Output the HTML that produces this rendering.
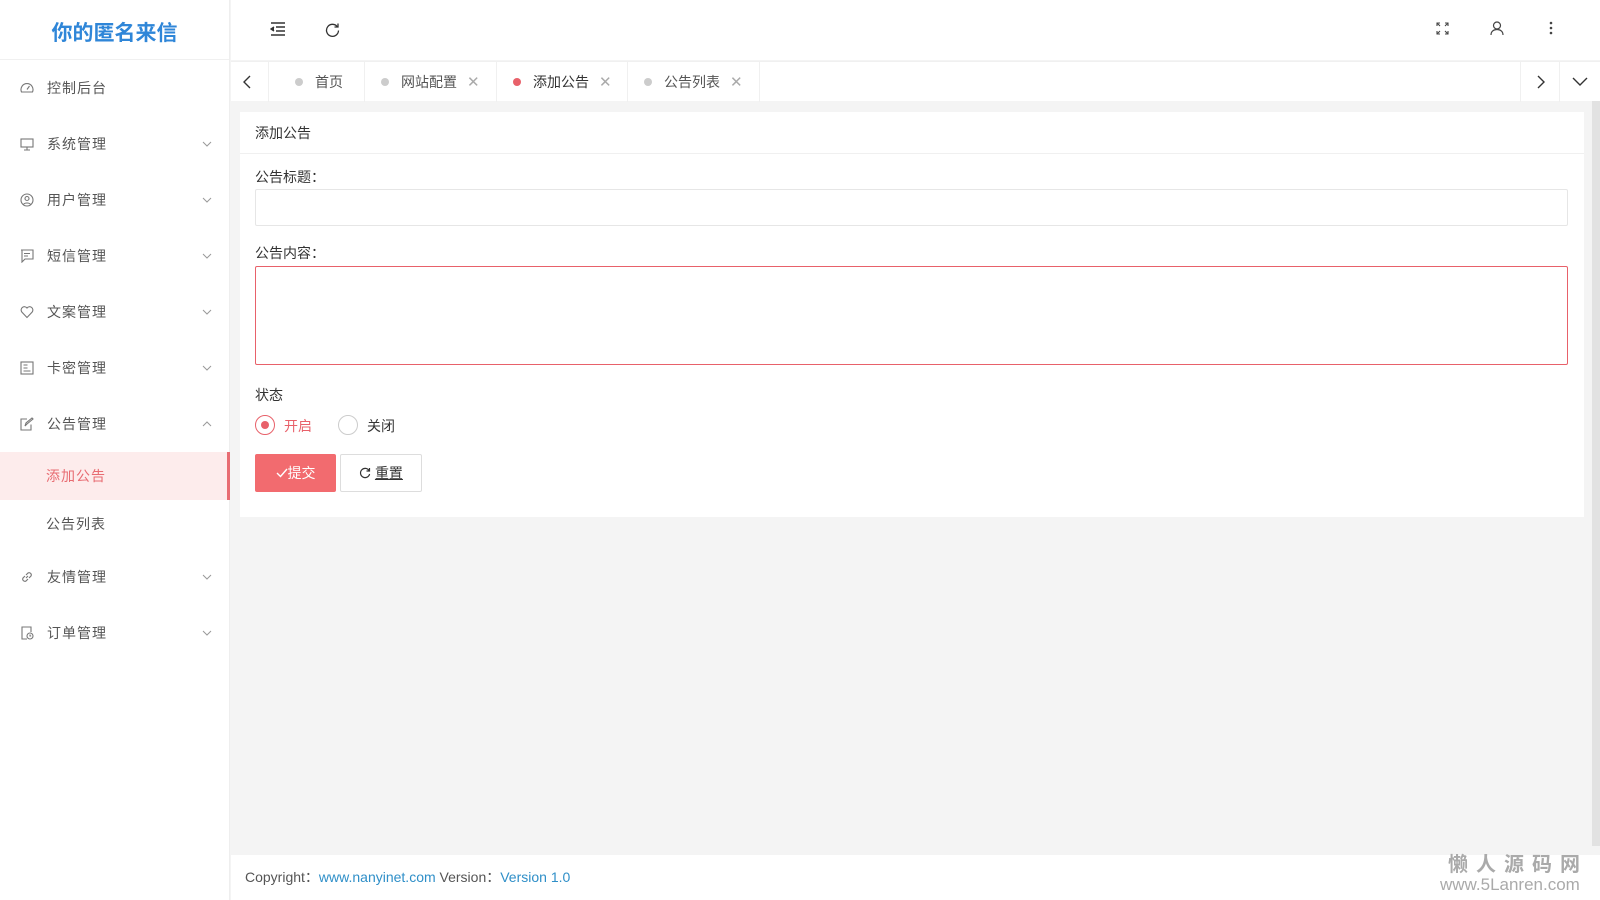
<!DOCTYPE html>
<html><head><meta charset="utf-8"><style>
*{box-sizing:border-box;margin:0;padding:0}
body{width:1600px;height:900px;overflow:hidden;background:#f4f4f4;font-family:"Liberation Sans","Noto Sans CJK SC",sans-serif;font-size:14px;color:#333;position:relative}
.side{position:absolute;left:0;top:0;width:230px;height:900px;background:#fff;border-right:1px solid #eee}
.logo{height:60px;line-height:68px;text-align:center;font-size:21px;font-weight:bold;color:#2f86d8;border-bottom:1px solid #f0f0f0}
.mi{position:absolute;left:0;width:230px;height:30px;line-height:30px;color:#555;letter-spacing:1px}
.mi svg{position:absolute;left:20px;top:8px}
.mi .t{position:absolute;left:47px}
.sub{position:absolute;left:0;width:230px;height:48px;line-height:48px;padding-left:46px;color:#555;letter-spacing:1px}
.act{background:#fdecec;color:#e86c72;border-right:3px solid #e86c72}
.top{position:absolute;left:231px;top:0;right:0;height:60px;background:#fff}
.tabs{position:absolute;left:231px;top:61px;right:0;height:40px;background:#fff;border-top:1px solid #f0f0f0}
.tab{position:absolute;top:0;height:40px;line-height:40px;border-right:1px solid #f0f0f0;color:#555}
.dot{display:inline-block;width:8px;height:8px;border-radius:50%;background:#ccc;margin-right:12px;vertical-align:1px}
.x{color:#aaa;margin-left:10px;font-size:15px}
.card{position:absolute;left:240px;top:112px;width:1344px;height:405px;background:#fff}
.ch{height:42px;line-height:42px;padding-left:15px;border-bottom:1px solid #f0f0f0;color:#333}
.lbl{position:absolute;left:15px;color:#333}
.inp{position:absolute;left:15px;width:1313px;border:1px solid #e6e6e6;border-radius:2px}
.foot{position:absolute;left:231px;top:855px;right:0;height:45px;background:#fff;line-height:45px;padding-left:14px;color:#555;font-size:14px}
.foot a{color:#2f8fc8;text-decoration:none}
</style></head><body>
<div class="side">
<div class="logo">你的匿名来信</div>
<div class="mi" style="top:73px"><svg width="14" height="14" viewBox="0 0 14 14" fill="none" stroke="#777" stroke-width="1.1"><path d="M1.5 11A6 6 0 1 1 12.5 11Z"/><path d="M7 8.5L9.5 5"/></svg><span class="t">控制后台</span></div>
<div class="mi" style="top:129px"><svg width="14" height="14" viewBox="0 0 14 14" fill="none" stroke="#777" stroke-width="1.1"><rect x="1" y="2" width="12" height="8"/><path d="M4 13h6M7 10v3"/></svg><span class="t">系统管理</span><svg width="10" height="6" viewBox="0 0 10 6" style="left:202px;top:12px"><path d="M1 1l4 4 4-4" fill="none" stroke="#999"/></svg></div>
<div class="mi" style="top:185px"><svg width="14" height="14" viewBox="0 0 14 14" fill="none" stroke="#777" stroke-width="1.1"><circle cx="7" cy="7" r="6"/><circle cx="7" cy="5.5" r="2"/><path d="M3.5 11.5c1-2 6-2 7 0"/></svg><span class="t">用户管理</span><svg width="10" height="6" viewBox="0 0 10 6" style="left:202px;top:12px"><path d="M1 1l4 4 4-4" fill="none" stroke="#999"/></svg></div>
<div class="mi" style="top:241px"><svg width="14" height="14" viewBox="0 0 14 14" fill="none" stroke="#777" stroke-width="1.1"><path d="M1 1h12v9H5l-3 3V1z"/><path d="M4 4.5h6M4 7h4"/></svg><span class="t">短信管理</span><svg width="10" height="6" viewBox="0 0 10 6" style="left:202px;top:12px"><path d="M1 1l4 4 4-4" fill="none" stroke="#999"/></svg></div>
<div class="mi" style="top:297px"><svg width="14" height="14" viewBox="0 0 14 14" fill="none" stroke="#777" stroke-width="1.1"><path d="M7 12.5L1.8 7A3 3 0 0 1 7 3a3 3 0 0 1 5.2 4z"/></svg><span class="t">文案管理</span><svg width="10" height="6" viewBox="0 0 10 6" style="left:202px;top:12px"><path d="M1 1l4 4 4-4" fill="none" stroke="#999"/></svg></div>
<div class="mi" style="top:353px"><svg width="14" height="14" viewBox="0 0 14 14" fill="none" stroke="#777" stroke-width="1.1"><rect x="1" y="1" width="12" height="12"/><path d="M3.5 4h4M3.5 7h4M3.5 10h7"/></svg><span class="t">卡密管理</span><svg width="10" height="6" viewBox="0 0 10 6" style="left:202px;top:12px"><path d="M1 1l4 4 4-4" fill="none" stroke="#999"/></svg></div>
<div class="mi" style="top:409px"><svg width="14" height="14" viewBox="0 0 14 14" fill="none" stroke="#777" stroke-width="1.1"><path d="M11 7.5V13H1V2h6"/><path d="M5 9l1-3 6-5 1 1-6 5z"/></svg><span class="t">公告管理</span><svg width="10" height="6" viewBox="0 0 10 6" style="left:202px;top:12px"><path d="M1 5l4-4 4 4" fill="none" stroke="#999"/></svg></div>
<div class="sub act" style="top:452px">添加公告</div>
<div class="sub" style="top:500px">公告列表</div>
<div class="mi" style="top:562px"><svg width="14" height="14" viewBox="0 0 14 14" fill="none" stroke="#777" stroke-width="1.1"><path d="M6 8l2-2M5 6L3 8a2.2 2.2 0 0 0 3 3l2-2M9 8l2-2a2.2 2.2 0 0 0-3-3L6 5"/></svg><span class="t">友情管理</span><svg width="10" height="6" viewBox="0 0 10 6" style="left:202px;top:12px"><path d="M1 1l4 4 4-4" fill="none" stroke="#999"/></svg></div>
<div class="mi" style="top:618px"><svg width="14" height="14" viewBox="0 0 14 14" fill="none" stroke="#777" stroke-width="1.1"><path d="M7 13H2V1h9v5"/><circle cx="10" cy="10" r="3"/><path d="M10 8.5V10h1.2"/></svg><span class="t">订单管理</span><svg width="10" height="6" viewBox="0 0 10 6" style="left:202px;top:12px"><path d="M1 1l4 4 4-4" fill="none" stroke="#999"/></svg></div>
</div>
<div class="top">
<svg style="position:absolute;left:39px;top:22px" width="16" height="14" viewBox="0 0 16 14" fill="none" stroke="#333" stroke-width="1.4"><path d="M1 1h14M6 5h9M6 9h9M1 13h14"/><path d="M4 5L1 7l3 2" fill="#333"/></svg>
<svg style="position:absolute;left:94px;top:22px" width="15" height="15" viewBox="0 0 15 15" fill="none" stroke="#333" stroke-width="1.3"><path d="M12.5 5A6 6 0 1 0 13.5 8.5"/><path d="M13 1.5V5H9.5"/></svg>
<svg style="position:absolute;left:1205px;top:22px" width="13" height="13" viewBox="0 0 13 13" fill="none" stroke="#444" stroke-width="1.1"><path d="M1 4V1h3M9 1h3v3M12 9v3H9M4 12H1V9M1 1l3 3M12 1L9 4M12 12L9 9M1 12l3-3"/></svg>
<svg style="position:absolute;left:1259px;top:21px" width="14" height="15" viewBox="0 0 14 15" fill="none" stroke="#444" stroke-width="1.2"><circle cx="7" cy="4.5" r="3.5"/><path d="M1 14c0-3.5 2.5-5.5 6-5.5s6 2 6 5.5"/></svg>
<svg style="position:absolute;left:1318px;top:21px" width="4" height="14" viewBox="0 0 4 14" fill="#444"><circle cx="2" cy="2" r="1.3"/><circle cx="2" cy="7" r="1.3"/><circle cx="2" cy="12" r="1.3"/></svg>
</div>
<div class="tabs">
<div class="tab" style="left:0;width:38px"><svg style="position:absolute;left:12px;top:13px" width="8" height="14" viewBox="0 0 8 14"><path d="M7 1L1 7l6 6" fill="none" stroke="#333" stroke-width="1.4"/></svg></div>
<div class="tab" style="left:38px;width:96px;padding-left:26px"><span class="dot"></span>首页</div>
<div class="tab" style="left:134px;width:132px;padding-left:16px"><span class="dot"></span>网站配置<span class="x">✕</span></div>
<div class="tab" style="left:266px;width:131px;padding-left:16px;color:#333"><span class="dot" style="background:#e8616a"></span>添加公告<span class="x">✕</span></div>
<div class="tab" style="left:397px;width:132px;padding-left:16px"><span class="dot"></span>公告列表<span class="x">✕</span></div>
<div class="tab" style="left:1289px;width:40px;border-left:1px solid #f0f0f0"><svg style="position:absolute;left:16px;top:13px" width="8" height="14" viewBox="0 0 8 14"><path d="M1 1l6 6-6 6" fill="none" stroke="#333" stroke-width="1.4"/></svg></div>
<div class="tab" style="left:1329px;width:40px;border:none"><svg style="position:absolute;left:12px;top:15px" width="16" height="9" viewBox="0 0 16 9"><path d="M1 1l7 7 7-7" fill="none" stroke="#333" stroke-width="1.4"/></svg></div>
</div>
<div class="card">
<div class="ch">添加公告</div>
<div class="lbl" style="top:55px">公告标题：</div>
<div class="inp" style="top:77px;height:37px"></div>
<div class="lbl" style="top:131px">公告内容：</div>
<div class="inp" style="top:154px;height:99px;border-color:#e8616a"></div>
<div class="lbl" style="top:273px">状态</div>
<div style="position:absolute;left:15px;top:303px;width:20px;height:20px;border:1px solid #e8616a;border-radius:50%"><div style="position:absolute;left:5px;top:5px;width:8px;height:8px;border-radius:50%;background:#e8616a"></div></div>
<div style="position:absolute;left:44px;top:304px;color:#e8616a">开启</div>
<div style="position:absolute;left:98px;top:303px;width:20px;height:20px;border:1px solid #ccc;border-radius:50%"></div>
<div style="position:absolute;left:127px;top:304px">关闭</div>
<div style="position:absolute;left:15px;top:342px;width:81px;height:38px;background:#f26b6f;border-radius:2px;color:#fff;line-height:38px;text-align:center"><svg width="12" height="10" viewBox="0 0 12 10" style="vertical-align:0"><path d="M1 5l3.5 3.5L11 1" fill="none" stroke="#fff" stroke-width="1.4"/></svg>提交</div>
<div style="position:absolute;left:100px;top:342px;width:82px;height:38px;border:1px solid #ddd;border-radius:2px;line-height:36px;text-align:center;color:#333"><svg width="12" height="12" viewBox="0 0 12 12" style="vertical-align:-1px"><path d="M10 3.5A4.6 4.6 0 1 0 10.6 7" fill="none" stroke="#333" stroke-width="1.2"/><path d="M10.5 1v3h-3" fill="none" stroke="#333" stroke-width="1.2"/></svg> <u>重置</u></div>
</div>
<div style="position:absolute;left:1592px;top:101px;width:8px;height:745px;background:#e2e2e2"></div>
<div class="foot">Copyright：<a>www.nanyinet.com</a> Version：<a>Version 1.0</a></div>
<div style="position:absolute;left:1448px;top:848px;color:#aaa;font-size:20px;font-weight:bold;letter-spacing:8px">懒人源码网</div>
<div style="position:absolute;left:1440px;top:875px;color:#aaa;font-size:17px">www.5Lanren.com</div>
</body></html>
